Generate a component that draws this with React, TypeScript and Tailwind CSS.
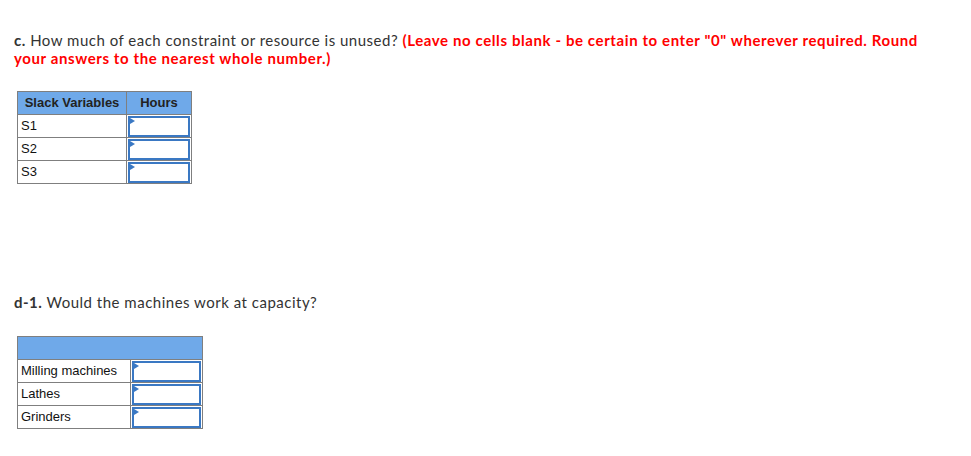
import React from 'react'

function Flag() {
  return (
    <svg width="5" height="6" viewBox="0 0 5 6" className="absolute left-0 top-0">
      <polygon points="0,0 5,3 0,6" fill="#3a78c3" />
    </svg>
  )
}

function InputCell() {
  return (
    <td className="border border-[#7f7f7f] p-0 h-[23px]">
      <div className="relative h-[21px] mx-[1px] border-2 border-[#3a78c3] bg-white">
        <Flag />
      </div>
    </td>
  )
}

const slack = ['S1', 'S2', 'S3']
const machines = ['Milling machines', 'Lathes', 'Grinders']

export default function App() {
  return (
    <div className="min-h-[456px] w-[971px] bg-white px-[14px] pt-[31px] text-[#333]">
      <p className="w-[915px] text-[15px] leading-[18px] font-['Lato','Liberation_Sans',sans-serif] text-[#333]">
        <span className="font-bold tracking-[0.5px]">c.</span>
        <span className="tracking-[0.5px]"> How much of each constraint or resource is unused? </span>
        <span className="font-bold tracking-[0.6px] text-[#ff0000]">
          (Leave no cells blank - be certain to enter "0" wherever required. Round your answers to the nearest whole number.)
        </span>
      </p>

      <table className="mt-[24px] ml-[3px] border-collapse font-['Liberation_Sans',Arial,sans-serif] text-[13px] text-[#111]">
        <thead>
          <tr className="h-[23px] bg-[#6fa9e9]">
            <th className="w-[109px] border border-[#7f7f7f] px-[4px] text-center font-bold text-[#222]">Slack Variables</th>
            <th className="w-[65px] border border-[#7f7f7f] px-[4px] text-center font-bold text-[#222]">Hours</th>
          </tr>
        </thead>
        <tbody>
          {slack.map(s => (
            <tr key={s} className="h-[23px]">
              <td className="border border-[#7f7f7f] px-[3px] text-left">{s}</td>
              <InputCell />
            </tr>
          ))}
        </tbody>
      </table>

      <p className="mt-[109px] text-[15px] leading-[18px] font-['Lato','Liberation_Sans',sans-serif] text-[#333]">
        <span className="font-bold tracking-[0.5px]">d-1.</span>
        <span className="tracking-[0.5px]"> Would the machines work at capacity?</span>
      </p>

      <table className="mt-[25px] ml-[3px] border-collapse font-['Liberation_Sans',Arial,sans-serif] text-[13px] text-[#111]">
        <thead>
          <tr className="h-[23px] bg-[#6fa9e9]">
            <th colSpan={2} className="border border-[#7f7f7f]"></th>
          </tr>
        </thead>
        <tbody>
          {machines.map(m => (
            <tr key={m} className="h-[23px]">
              <td className="w-[113px] border border-[#7f7f7f] px-[3px] text-left whitespace-nowrap">{m}</td>
              <td className="w-[72px] border border-[#7f7f7f] p-0 h-[23px]">
                <div className="relative h-[21px] mx-[1px] border-2 border-[#3a78c3] bg-white">
                  <Flag />
                </div>
              </td>
            </tr>
          ))}
        </tbody>
      </table>
    </div>
  )
}
